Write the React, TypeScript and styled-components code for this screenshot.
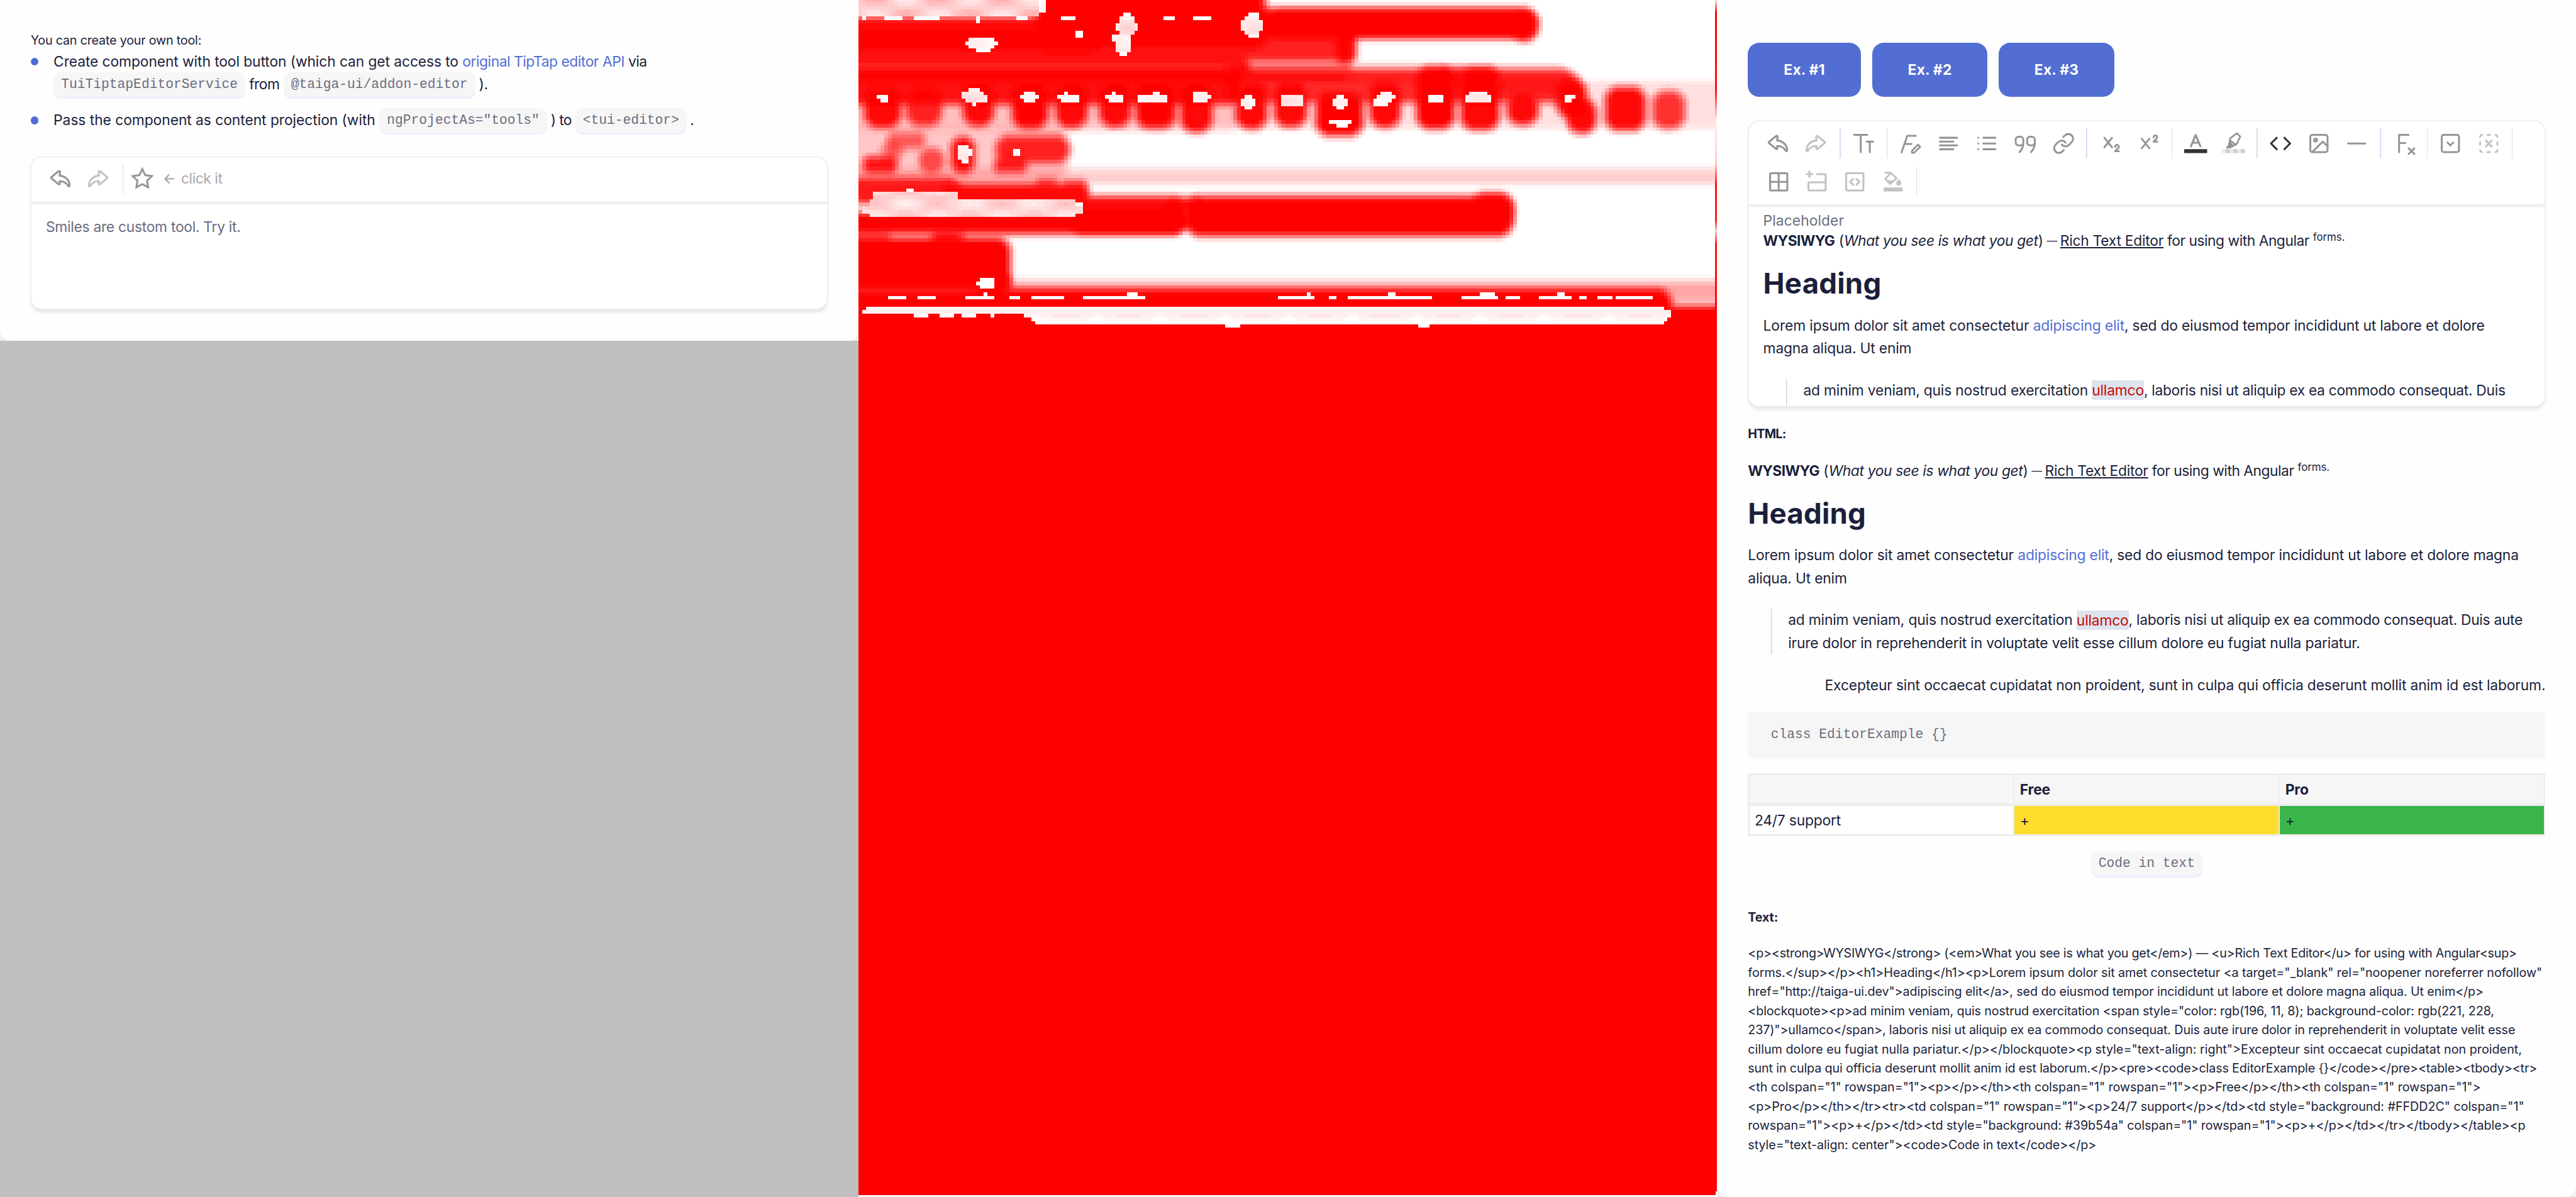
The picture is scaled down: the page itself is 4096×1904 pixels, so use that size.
import React from "react";
import styled, { createGlobalStyle, css } from "styled-components";

/* 1rem is ten layout pixels; the board is 2694 layout pixels wide. */
const GlobalStyle = createGlobalStyle`
  html { font-size: calc(100vw / 269.4); }
  body { margin: 0; background: #fff; overflow: hidden; }
  *, *::before, *::after { box-sizing: border-box; }
`;

const ink = "#1b1f3b";
const muted = "#6b6d80";
const accent = "#526ed3";
const edge = "#ededed";
const sans = `Inter, "Liberation Sans", sans-serif`;
const mono = `"Liberation Mono", "Courier New", monospace`;

const Board = styled.main`
  display: flex;
  width: 269.4rem;
  height: 125.2rem;
  overflow: hidden;
  font-family: ${sans};
  font-size: 1.5rem;
  line-height: 2.4rem;
  color: ${ink};
`;

const Column = styled.section<{ $backdrop: string }>`
  width: 89.8rem;
  height: 100%;
  flex: none;
  background: ${(p) => p.$backdrop};
`;

const SheetFrame = styled.div`
  background: #efefef;
`;

const Sheet = styled.div<{ $height: string }>`
  display: flow-root;
  height: ${(p) => p.$height};
  padding: 0 3.2rem;
  background: #fefefe;
  border-radius: 0 0 1.1rem 1.1rem;
`;

/* ---------- text ---------- */

const Line = styled.div<{ $right?: boolean }>`
  display: flex;
  justify-content: ${(p) => (p.$right ? "flex-end" : "flex-start")};
  white-space: pre;
`;

const Seg = styled.span<{ $ls?: number }>`
  letter-spacing: ${(p) => (p.$ls ?? -8) / 1000}em;
`;
const Strong = styled(Seg)`
  font-weight: 700;
`;
const Em = styled(Seg)`
  font-style: italic;
`;
const Dash = styled(Seg)`
  font-size: 1.1rem;
`;
const Under = styled(Seg)`
  text-decoration: underline;
  text-decoration-thickness: 0.14rem;
  text-underline-offset: 0.14rem;
`;
const Sup = styled(Seg)`
  font-size: 1.12rem;
  transform: translateY(-0.42rem);
`;
const Anchor = styled(Seg)`
  color: ${accent};
`;
const Mark = styled(Seg)`
  height: 2.05rem;
  margin-top: 0.15rem;
  line-height: 2.1rem;
  color: #c40b08;
  background: #dde4ed;
`;

const Small = styled.div<{ $gap?: string; $bold?: boolean }>`
  margin-top: ${(p) => p.$gap ?? 0};
  font-size: 1.3rem;
  line-height: 2rem;
  font-weight: ${(p) => (p.$bold ? 700 : 400)};
  white-space: pre;
`;

const Pill = styled.code`
  display: inline-block;
  height: 2.56rem;
  margin: -0.4rem 0;
  padding: 0.05rem 0.8rem 0;
  border-radius: 0.8rem;
  background: #f6f6f6;
  box-shadow: 0 0.2rem 0 #eceffe;
  color: ${muted};
  font: 1.4rem/2.56rem ${mono};
  vertical-align: 0.13rem;
`;

const Bullets = styled.ul`
  display: flex;
  flex-direction: column;
  gap: 1.35rem;
  margin: 0;
  padding: 0;
  list-style: none;
`;
const Bullet = styled.li`
  display: flex;
  gap: 1.6rem;
  white-space: pre;
  &::before {
    content: "";
    flex: none;
    width: 0.8rem;
    height: 0.8rem;
    margin-top: 0.8rem;
    border-radius: 50%;
    background: ${accent};
  }
`;

/* ---------- editor ---------- */

const EditorCard = styled.div<{ $height: string; $gap: string }>`
  display: flex;
  flex-direction: column;
  height: ${(p) => p.$height};
  margin: ${(p) => p.$gap} 0.1rem 0;
  overflow: hidden;
  border-radius: 1.1rem;
  background: #fff;
  box-shadow: 0 0 0 0.1rem ${edge}, 0 0.3rem 0.35rem 0.05rem rgba(0, 0, 0, 0.09);
`;
const Tools = styled.div`
  display: flex;
  flex-wrap: wrap;
  flex: none;
  padding: 0.3rem 1.1rem 0.4rem;
  box-shadow: 0 0.1rem 0 #e9e9e9, 0 0.2rem 0.3rem rgba(0, 0, 0, 0.1);
`;
const Tool = styled.span<{ $off?: boolean; $on?: boolean; $slim?: boolean }>`
  display: flex;
  align-items: center;
  justify-content: center;
  width: ${(p) => (p.$slim ? 3.2 : 4)}rem;
  height: 4rem;
  color: ${(p) => (p.$on ? "#333" : p.$off ? "#c2c2c2" : "#959595")};
`;
const Divider = styled.span`
  width: 0.1rem;
  height: 3.2rem;
  margin: 0.4rem;
  background: #d7def2;
`;
const Hint = styled.span`
  display: flex;
  align-items: center;
  gap: 0.7rem;
  margin-left: 0.65rem;
  color: #a9a9a9;
`;
const EditorBody = styled.div<{ $top: string }>`
  flex: 1;
  min-height: 0;
  overflow: hidden;
  padding: ${(p) => p.$top} 1.5rem 0;
`;
const Placeholder = styled.div<{ $height?: string }>`
  height: ${(p) => p.$height ?? "auto"};
  color: ${muted};
  white-space: pre;
`;

const Buttons = styled.div`
  display: flex;
  gap: 1.2rem;
  padding-top: 4.5rem;
`;
const Button = styled.button<{ $width: string }>`
  width: ${(p) => p.$width};
  height: 5.6rem;
  padding: 0;
  border: 0;
  border-radius: 1.2rem;
  background: ${accent};
  color: #fff;
  font: 700 1.5rem/2.4rem ${sans};
`;

/* ---------- document ---------- */

const Title = styled.h1`
  display: flex;
  margin: 1.46rem 0 1.39rem;
  font-size: 3rem;
  line-height: 3.6rem;
  font-weight: 700;
`;
const Quote = styled.blockquote<{ $gap: string; $tail?: string }>`
  margin: ${(p) => p.$gap} 0 0 2.4rem;
  padding: 0 0 ${(p) => p.$tail ?? 0} 1.8rem;
  box-shadow: inset 0.1rem 0 0 #d5d5d8;
`;
const Spaced = styled.div<{ $gap: string; $center?: boolean }>`
  margin-top: ${(p) => p.$gap};
  ${(p) =>
    p.$center &&
    css`
      display: flex;
      justify-content: center;
    `}
`;
const CodeBlock = styled.pre`
  height: 4.8rem;
  margin: 1.57rem 0 1.6rem;
  padding: 0 2.4rem;
  border-radius: 0.4rem;
  background: #f6f6f6;
  color: ${muted};
  font: 1.4rem/4.7rem ${mono};
`;
const Table = styled.div`
  display: grid;
  grid-template-columns: repeat(3, 1fr);
  grid-auto-rows: 3rem;
  gap: 0.2rem 0.15rem;
  padding: 0.2rem 0.15rem;
  background: ${edge};
`;
const Cell = styled.div<{ $fill?: string; $head?: boolean }>`
  padding-left: 0.55rem;
  line-height: 3rem;
  background: ${(p) => p.$fill ?? (p.$head ? "#f6f6f6" : "#fff")};
  font-weight: ${(p) => (p.$head ? 700 : 400)};
`;

/* ---------- icons ---------- */

const Glyph = styled.svg<{ $size?: string }>`
  width: ${(p) => p.$size ?? "2.4rem"};
  height: ${(p) => p.$size ?? "2.4rem"};
  flex: none;
  overflow: visible;
  fill: none;
  stroke: currentColor;
  stroke-width: 2;
  stroke-linecap: round;
  stroke-linejoin: round;
`;

const arrowShape =
  "M2 11.7Q1.1 11 2 10.2L9.2 4.3Q10.9 3.4 10.8 5L10.3 8.8C17 9.4 20.8 14 20.8 19Q20.6 20.7 19.4 19.7C17.4 16 14.5 14.5 10.3 14.6L10.7 16.9Q10.6 18.5 9.2 17.7Z";

const icons: Record<string, React.ReactNode> = {
  undo: <path d={arrowShape} />,
  redo: <path d={arrowShape} transform="translate(21.8 0) scale(-1 1)" />,
  star: (
    <path
      d="M12 2l3.09 6.26L22 9.27l-5 4.87 1.18 6.88L12 17.77l-6.18 3.25L7 14.14 2 9.27l6.91-1.01z"
      strokeLinejoin="miter"
    />
  ),
  size: <path d="M2 3h14M9 3v18M15.2 10h6.8M18.5 10v11" />,
  font: (
    <>
      <path d="M18 4H9L3 21.4M6.4 12.5h7" />
      <path d="M20.2 13.2l2.3 2.4-6.4 6.1H14v-2.2z" strokeWidth={1.9} />
    </>
  ),
  align: <path d="M3 6h18M3 10h14M3 14h18M3 18h14" />,
  list: <path d="M3 6h.01M3 12h.01M3 18h.01M8.4 6H21M8.4 12H21M8.4 18H21" />,
  quote: (
    <path d="M10 8a3 3 0 0 0-3-3H5a3 3 0 0 0-3 3v3a3 3 0 0 0 3 3h2a3 3 0 0 0 3-3zv4c0 4-1.6 6.5-4 9M22 8a3 3 0 0 0-3-3h-2a3 3 0 0 0-3 3v3a3 3 0 0 0 3 3h2a3 3 0 0 0 3-3zv4c0 4-1.6 6.5-4 9" />
  ),
  link: (
    <path d="M10 13a5 5 0 0 0 7.54.54l3-3a5 5 0 0 0-7.07-7.07l-1.72 1.71M14 11a5 5 0 0 0-7.54-.54l-3 3a5 5 0 0 0 7.07 7.07l1.71-1.71" />
  ),
  sub: <path d="M6 6l8 10M14 6L6 16M17.3 15.4a1.9 1.8 0 1 1 3.3 1.2L17.3 20h3.9" />,
  sup: <path d="M5 7l8 10M13 7L5 17M17.3 5.4a1.9 1.8 0 1 1 3.3 1.2L17.3 10h3.9" />,
  color: (
    <>
      <path d="M7 15l5-12 5 12M9 11.2h6" />
      <path d="M0 18h24v4H0z" fill="#333" stroke="none" />
    </>
  ),
  marker: (
    <>
      <path d="M15.7 1.3l3.5 3.4-3.5 7.5-3.8 2.2-4-3.7.7-4zM8.4 8.6l6.2 4.8" strokeWidth={1.8} />
      <path d="M7.2 11.4l4.4 3.8-2.9 1.5H4.5l2.4-3.3z" fill="currentColor" strokeWidth={0.8} />
      <path d="M0 18h24v4H0z" fill="#e7e9ec" stroke="none" />
      <path d="M4 18h4v4H4zM12 18h4v4h-4zM20 18h4v4h-4z" fill="#c9cdd3" stroke="none" />
    </>
  ),
  code: <path d="M16 18l6-6-6-6M8 6l-6 6 6 6" />,
  image: (
    <>
      <rect x={3} y={3} width={18} height={18} rx={2} />
      <circle cx={8.5} cy={8.5} r={1.5} />
      <path d="M21 15l-5-5L5 21" />
    </>
  ),
  rule: <path d="M3 12h18" />,
  clear: <path d="M17 3H7v18M7 11.5h6.5M17 17l6 6M23 17l-6 6" />,
  collapse: (
    <>
      <rect x={3} y={3} width={18} height={18} rx={2} />
      <path d="M9 11l3 3 3-3" />
    </>
  ),
  ungroup: (
    <path d="M5 3a2 2 0 0 0-2 2M19 3a2 2 0 0 1 2 2M21 19a2 2 0 0 1-2 2M5 21a2 2 0 0 1-2-2M10.8 3h2.4M10.8 21h2.4M3 10.8v2.4M21 10.8v2.4M9 9l6 6M15 9l-6 6" />
  ),
  table: (
    <>
      <rect x={3} y={3} width={18} height={18} rx={1} />
      <path d="M12 3v18M3 12h18" />
    </>
  ),
  addRow: (
    <path d="M4 1v6M1 4h6M12 4h8a1 1 0 0 1 1 1v15a1 1 0 0 1-1 1H4a1 1 0 0 1-1-1v-6.5a1 1 0 0 1 1-1h17" />
  ),
  merge: (
    <>
      <rect x={3} y={3} width={18} height={18} rx={1} />
      <path d="M10.3 9L7 12l3.3 3M13.7 9l3.3 3-3.3 3" />
    </>
  ),
  fill: (
    <>
      <path d="M4 2.5h5.5l6 5.7-6.7 6-5-5.2 5.7-6" strokeWidth={1.9} />
      <path d="M3.6 10.5h10.8l-5.6 4.3z" fill="currentColor" stroke="none" />
      <path
        d="M17.9 9c1.6 2 2.6 3.2 2.6 4.4a2.6 2.6 0 0 1-5.2 0c0-1.2 1-2.4 2.6-4.4z"
        fill="currentColor"
        stroke="none"
      />
      <rect x={2} y={18} width={20} height={4} rx={0.8} fill="currentColor" stroke="none" />
    </>
  ),
};

const Icon = ({ name }: { name: string }) => <Glyph viewBox="0 0 24 24">{icons[name]}</Glyph>;

type Entry = string | null;
/* null draws a divider, "-" marks a disabled tool and "+" an active one */
const toolbar: Entry[] = [
  "undo", "-redo", null, "size", null, "font", "align", "list", "quote", "link", null,
  "sub", "sup", null, "color", "marker", null, "+code", "image", "rule", null, "clear", null,
  "collapse", "-ungroup", null, "table", "-addRow", "-merge", "-fill", null,
];

const ToolRow = ({ entries }: { entries: Entry[] }) => (
  <>
    {entries.map((e, i) =>
      e === null ? (
        <Divider key={i} />
      ) : (
        <Tool key={i} $off={e[0] === "-"} $on={e[0] === "+"} $slim={e === "star"}>
          <Icon name={e.replace(/^[-+]/, "")} />
        </Tool>
      )
    )}
  </>
);

/* ---------- difference map ---------- */

/* The map is sampled on a coarse grid from soft red bands; islands stay pale. */
type Box = [number, number, number, number, number];
const MAP_W = 3129;
const CELL_W = 13.4;
const CELL_H = 22.49;
const FIRST_ROW = 13;
const ROWS = 91;
const SOLID_FROM = 2037;

const bands: Box[] = [
  [640, -180, 1490, 320, 0.99], [1400, 38, 2480, 250, 0.98], [1500, 60, 2460, 240, 0.9], [2380, 70, 2478, 270, 0.8],
  [-80, 95, 900, 340, 0.97], [-80, 180, 1805, 400, 0.88], [1735, 170, 1820, 412, 0.95],
  [-80, 330, 1430, 520, 0.85], [1330, 385, 1800, 520, 0.45], [1330, 405, 2330, 520, 0.5],
  [-80, 425, 1400, 670, 0.94], [1330, 435, 2635, 655, 0.82], [2100, 410, 2600, 600, 0.5],
  [15, 540, 162, 812, 0.97], [168, 540, 310, 802, 0.82], [374, 500, 500, 802, 0.96], [552, 500, 698, 818, 0.98],
  [712, 500, 840, 812, 0.97], [872, 500, 998, 808, 0.97], [1005, 500, 1162, 818, 0.98], [1168, 500, 1296, 842, 0.97],
  [1368, 510, 1496, 822, 0.97], [1508, 510, 1642, 808, 0.97], [1660, 570, 1846, 864, 1], [1856, 500, 1982, 812, 0.96],
  [2026, 410, 2180, 820, 1], [2188, 420, 2342, 828, 0.98], [2356, 580, 2484, 795, 0.96], [2536, 490, 2660, 750, 0.96],
  [2576, 610, 2696, 850, 0.97], [2714, 535, 2876, 832, 0.96], [2886, 560, 3018, 820, 0.78],
  [-80, 640, 1400, 825, 0.25], [1400, 495, 3300, 820, 0.12],
  [-80, 790, 770, 1140, 0.22], [100, 820, 250, 945, 0.55], [80, 880, 165, 1020, 0.5], [10, 970, 148, 1098, 0.9],
  [215, 920, 318, 1098, 0.65], [332, 850, 430, 1098, 0.95], [495, 840, 776, 1035, 0.84], [490, 980, 618, 1092, 0.85],
  [-180, 1050, 3300, 1165, 0.2],
  [-40, 1105, 375, 1290, 0.9], [300, 1138, 845, 1290, 0.97], [645, 1110, 725, 1200, 0.6], [745, 1120, 835, 1210, 0.5],
  [-80, 1320, 1195, 1482, 0.99], [760, 1220, 1195, 1475, 0.98], [1120, 1228, 1270, 1445, 0.93],
  [1190, 1218, 2390, 1495, 0.99], [2230, 1200, 2392, 1445, 0.9],
  [-80, 1480, 560, 1840, 1], [-80, 1440, 120, 1560, 0.6], [260, 1440, 390, 1580, 0.85], [420, 1700, 560, 1860, 0.95],
  [-180, 1755, 3300, 1905, 0.34], [-180, 1800, 2970, 2400, 1],
  [-180, 1905, 3300, 2400, 1],
];

const islands: Box[] = [
  [0, 0, 655, 100, 0.3], [640, 0, 678, 80, 0.03], [8, 100, 22, 125, 0], [90, 102, 155, 125, 0], [196, 102, 290, 125, 0],
  [424, 95, 436, 148, 0], [572, 102, 612, 125, 0], [735, 102, 786, 125, 0],
  [398, 237, 492, 305, 0.07], [385, 260, 505, 282, 0.07], [425, 300, 478, 327, 0],
  [787, 192, 813, 237, 0], [948, 102, 1002, 215, 0.18], [962, 80, 988, 102, 0], [935, 148, 1013, 192, 0.12],
  [922, 215, 988, 260, 0.1], [935, 250, 988, 327, 0.16], [948, 320, 975, 350, 0],
  [1110, 102, 1150, 125, 0], [1217, 102, 1284, 125, 0], [1405, 102, 1459, 215, 0.13], [1392, 125, 1473, 192, 0.12], [1419, 80, 1459, 237, 0.04],
  [62, 597, 102, 620, 0], [75, 597, 102, 642, 0], [398, 552, 438, 640, 0.15], [371, 575, 452, 620, 0.15], [385, 597, 464, 642, 0.12], [412, 640, 424, 665, 0],
  [600, 575, 640, 642, 0.05], [587, 597, 652, 620, 0.05], [735, 597, 800, 642, 0.06], [720, 597, 740, 620, 0], [747, 575, 760, 597, 0],
  [908, 597, 962, 642, 0.06], [894, 597, 910, 620, 0], [922, 575, 935, 597, 0], [1014, 597, 1122, 642, 0.06], [1069, 575, 1095, 597, 0],
  [1217, 575, 1271, 642, 0.1], [1271, 597, 1284, 620, 0], [1392, 620, 1445, 665, 0.1], [1405, 597, 1432, 687, 0.04], [1540, 597, 1618, 665, 0.12],
  [1727, 620, 1783, 665, 0.08], [1741, 597, 1769, 687, 0], [1903, 575, 1944, 642, 0.1], [1890, 597, 1957, 620, 0.1], [1877, 620, 1930, 665, 0.04],
  [2080, 597, 2134, 642, 0], [2228, 575, 2298, 642, 0.1], [2214, 597, 2310, 642, 0.07], [2568, 597, 2608, 620, 0], [2568, 597, 2594, 642, 0],
  [1713, 756, 1796, 778, 0], [1741, 756, 1783, 801, 0],
  [358, 912, 398, 1002, 0.12], [371, 912, 398, 1025, 0], [398, 935, 412, 980, 0], [558, 935, 586, 980, 0],
  [169, 1182, 196, 1207, 0], [47, 1207, 358, 1260, 0.28], [35, 1252, 786, 1362, 0.24], [9, 1297, 824, 1342, 0.22], [786, 1275, 813, 1340, 0.03],
  [438, 1747, 492, 1812, 0.02], [424, 1768, 440, 1790, 0], [452, 1836, 464, 1857, 0],
  [102, 1857, 169, 1878, 0], [210, 1857, 277, 1878, 0], [384, 1857, 492, 1878, 0], [546, 1857, 586, 1878, 0], [626, 1857, 746, 1878, 0],
  [814, 1857, 1042, 1878, 0], [974, 1836, 1014, 1857, 0], [1525, 1857, 1659, 1878, 0], [1632, 1836, 1647, 1857, 0],
  [1713, 1857, 1741, 1878, 0], [1783, 1857, 2094, 1878, 0], [1931, 1836, 1957, 1857, 0], [2202, 1857, 2338, 1878, 0],
  [2269, 1836, 2323, 1857, 0], [2365, 1857, 2418, 1878, 0], [2473, 1857, 2595, 1878, 0], [2540, 1836, 2567, 1857, 0],
  [2622, 1857, 2648, 1878, 0], [2689, 1857, 2743, 1878, 0], [2758, 1857, 2893, 1878, 0],
  [8, 1945, 640, 1968, 0.08], [22, 1923, 2935, 1945, 0.04], [196, 1968, 250, 1990, 0], [290, 1968, 344, 1990, 0], [370, 1968, 424, 1990, 0],
  [478, 1968, 492, 1990, 0], [600, 1945, 2960, 1990, 0.11], [626, 1990, 2945, 2014, 0.04], [640, 2014, 2935, 2036, 0.01],
];

/* Horizontal and vertical map units differ, so distances are taken in pixels. */
const UX = 1.742;
const UY = 3;
const SOFT = 30;

const coverage = (x: number, y: number, [x0, y0, x1, y1]: Box) => {
  const hw = (x1 - x0) / 2 / UX;
  const hh = (y1 - y0) / 2 / UY;
  const r = Math.min(hw, hh, 34);
  const dx = Math.abs(x / UX - (x0 + x1) / 2 / UX) - hw + r;
  const dy = Math.abs(y / UY - (y0 + y1) / 2 / UY) - hh + r;
  const d = Math.hypot(Math.max(dx, 0), Math.max(dy, 0)) + Math.min(Math.max(dx, dy), 0) - r;
  const t = Math.min(1, Math.max(0, -d / SOFT + 0.38));
  return t * t * (3 - 2 * t);
};

const heat = (x: number, y: number) => {
  for (const [x0, y0, x1, y1, tone] of islands) {
    if (x >= x0 && x < x1 && y >= y0 && y < y1) {
      return tone * (0.65 + 0.35 * Math.sin(x / 37) * Math.cos(y / 29));
    }
  }
  let rest = 1;
  for (const band of bands) rest *= 1 - band[4] * coverage(x, y, band);
  return 1 - rest;
};

type Run = { x: number; y: number; w: number; level: number };
const buildRuns = () => {
  const found: Run[] = [];
  const cols = Math.floor(MAP_W / CELL_W);
  for (let r = 0; r <= ROWS; r++) {
    const y = FIRST_ROW + (r - 1) * CELL_H;
    let run: Run | null = null;
    for (let c = 0; c < cols; c++) {
      const level = Math.round(heat((c + 0.5) * CELL_W, Math.max(2, y + CELL_H / 2)) * 32);
      if (run && run.level === level) run.w += CELL_W;
      else {
        run = { x: c * CELL_W, y, w: CELL_W, level };
        found.push(run);
      }
    }
  }
  return found;
};
const runs = buildRuns();
const tint = (level: number) => {
  const v = Math.round(255 * (1 - level / 32));
  return `rgb(255,${v},${v})`;
};

const MapSvg = styled.svg`
  display: block;
  width: 100%;
  height: 100%;
`;

const DiffMap = () => (
  <MapSvg viewBox="0 0 3129 7512" preserveAspectRatio="none" shapeRendering="crispEdges">
    {runs.map((r, i) => (
      <rect key={i} x={r.x} y={r.y} width={r.w} height={CELL_H + 0.5} fill={tint(r.level)} />
    ))}
    <rect x={0} y={SOLID_FROM} width={3124} height={7503 - SOLID_FROM} fill="#f00" />
    <path d="M1337 2036h54v22h-54zM2039 2036h41v22h-41z" fill="#fff" />
    <defs>
      <linearGradient id="rim" x1="0" y1="0" x2="0" y2="2100" gradientUnits="userSpaceOnUse">
        <stop offset="0" stopColor="#fdd" />
        <stop offset="0.04" stopColor="#f00" />
        <stop offset="0.27" stopColor="#f11" />
        <stop offset="0.36" stopColor="#fee" />
        <stop offset="0.49" stopColor="#fcc" />
        <stop offset="0.55" stopColor="#f11" />
        <stop offset="0.66" stopColor="#f22" />
        <stop offset="0.69" stopColor="#fcc" />
        <stop offset="0.73" stopColor="#f11" />
        <stop offset="1" stopColor="#f00" />
      </linearGradient>
    </defs>
    <rect x={3122} y={0} width={7} height={7480} fill="url(#rim)" />
  </MapSvg>
);

/* ---------- pages ---------- */

const Intro = () => (
  <Line>
    <Strong $ls={-28}>WYSIWYG</Strong>
    <Seg $ls={0}> (</Seg>
    <Em $ls={-16}>What you see is what you get</Em>
    <Seg $ls={-20}>) </Seg>
    <Dash $ls={-20}>—</Dash>
    <Seg $ls={-70}> </Seg>
    <Under $ls={-11}>Rich Text Editor</Under>
    <Seg $ls={-21}> for using with Angular </Seg>
    <Sup>forms.</Sup>
  </Line>
);

const Heading = () => (
  <Title>
    <Seg $ls={4}>Heading</Seg>
  </Title>
);

const Lorem = ({ tail, next }: { tail: string; next: string }) => (
  <>
    <Line>
      <Seg $ls={-5.5}>{"Lorem ipsum dolor sit amet consectetur "}</Seg>
      <Anchor>adipiscing elit</Anchor>
      <Seg>{tail}</Seg>
    </Line>
    <Line>
      <Seg>{next}</Seg>
    </Line>
  </>
);

const Veniam = ({ tail }: { tail: string }) => (
  <Line>
    <Seg>{"ad minim veniam, quis nostrud exercitation "}</Seg>
    <Mark>ullamco</Mark>
    <Seg $ls={-13.5}>{tail}</Seg>
  </Line>
);

const source: [string, number][] = [
  ["<p><strong>WYSIWYG</strong> (<em>What you see is what you get</em>) — <u>Rich Text Editor</u> for using with Angular<sup>", -12],
  ['forms.</sup></p><h1>Heading</h1><p>Lorem ipsum dolor sit amet consectetur <a target="_blank" rel="noopener noreferrer nofollow"', -4],
  ['href="http://taiga-ui.dev">adipiscing elit</a>, sed do eiusmod tempor incididunt ut labore et dolore magna aliqua. Ut enim</p>', -6],
  ['<blockquote><p>ad minim veniam, quis nostrud exercitation <span style="color: rgb(196, 11, 8); background-color: rgb(221, 228,', -7],
  ['237)">ullamco</span>, laboris nisi ut aliquip ex ea commodo consequat. Duis aute irure dolor in reprehenderit in voluptate velit esse', -7],
  ['cillum dolore eu fugiat nulla pariatur.</p></blockquote><p style="text-align: right">Excepteur sint occaecat cupidatat non proident,', 0],
  ["sunt in culpa qui officia deserunt mollit anim id est laborum.</p><pre><code>class EditorExample {}</code></pre><table><tbody><tr>", -8],
  ['<th colspan="1" rowspan="1"><p></p></th><th colspan="1" rowspan="1"><p>Free</p></th><th colspan="1" rowspan="1">', -4.5],
  ['<p>Pro</p></th></tr><tr><td colspan="1" rowspan="1"><p>24/7 support</p></td><td style="background: #FFDD2C" colspan="1"', -3.5],
  ['rowspan="1"><p>+</p></td><td style="background: #39b54a" colspan="1" rowspan="1"><p>+</p></td></tr></tbody></table><p', -4],
  ['style="text-align: center"><code>Code in text</code></p>', -4],
];

const CustomTool = () => (
  <SheetFrame>
    <Sheet $height="35.65rem">
      <Small $gap="3.25rem">
        <Seg $ls={-11}>You can create your own tool:</Seg>
      </Small>
      <Bullets>
        <Bullet>
          <div>
            <Line>
              <Seg $ls={-4}>Create component with tool button (which can get access to </Seg>
              <Anchor $ls={-20}>original TipTap editor API</Anchor>
              <Seg $ls={-20}> via</Seg>
            </Line>
            <div>
              <Pill>TuiTiptapEditorService</Pill>
              <Seg $ls={-20}> from </Seg>
              <Pill>@taiga-ui/addon-editor</Pill>
              <Seg $ls={-20}> ).</Seg>
            </div>
          </div>
        </Bullet>
        <Bullet>
          <div>
            <Seg $ls={-2}>Pass the component as content projection (with </Seg>
            <Pill>ngProjectAs="tools"</Pill>
            <Seg $ls={-28}> ) to </Seg>
            <Pill>{"<tui-editor>"}</Pill>
            <Seg $ls={-50}> .</Seg>
          </div>
        </Bullet>
      </Bullets>
      <EditorCard $height="15.9rem" $gap="2.62rem">
        <Tools>
          <ToolRow entries={["undo", "-redo", null, "star"]} />
          <Hint>
            <Glyph viewBox="0 0 11 11" $size="1.1rem">
              <path d="M10 5.5H1.5M5 1.2L1 5.5l4 4.3" strokeWidth={1.5} />
            </Glyph>
            <Seg $ls={-20}>click it</Seg>
          </Hint>
        </Tools>
        <EditorBody $top="1.47rem">
          <Placeholder>
            <Seg $ls={-12}>Smiles are custom tool. Try it.</Seg>
          </Placeholder>
        </EditorBody>
      </EditorCard>
    </Sheet>
  </SheetFrame>
);

const Wysiwyg = () => (
  <SheetFrame>
    <Sheet $height="125.2rem">
      <Buttons>
        <Button $width="11.8rem">
          <Seg $ls={10}>Ex. #1</Seg>
        </Button>
        <Button $width="12.05rem">
          <Seg $ls={10}>Ex. #2</Seg>
        </Button>
        <Button $width="12.05rem">
          <Seg $ls={10}>Ex. #3</Seg>
        </Button>
      </Buttons>
      <EditorCard $height="29.8rem" $gap="2.6rem">
        <Tools>
          <ToolRow entries={toolbar} />
        </Tools>
        <EditorBody $top="0.5rem">
          <Placeholder $height="2.12rem">
            <Seg $ls={3}>Placeholder</Seg>
          </Placeholder>
          <Intro />
          <Heading />
          <Lorem tail=", sed do eiusmod tempor incididunt ut labore et dolore" next="magna aliqua. Ut enim" />
          <Quote $gap="2rem" $tail="1.5rem">
            <Veniam tail=", laboris nisi ut aliquip ex ea commodo consequat. Duis" />
          </Quote>
        </EditorBody>
      </EditorCard>
      <Small $gap="1.9rem" $bold>
        <Seg $ls={-40}>HTML:</Seg>
      </Small>
      <Spaced $gap="1.68rem">
        <Intro />
        <Heading />
        <Lorem tail=", sed do eiusmod tempor incididunt ut labore et dolore magna" next="aliqua. Ut enim" />
        <Quote $gap="1.97rem">
          <Veniam tail=", laboris nisi ut aliquip ex ea commodo consequat. Duis aute" />
          <Line>
            <Seg>irure dolor in reprehenderit in voluptate velit esse cillum dolore eu fugiat nulla pariatur.</Seg>
          </Line>
        </Quote>
        <Spaced $gap="2.03rem">
          <Line $right>
            <Seg $ls={-6.5}>
              Excepteur sint occaecat cupidatat non proident, sunt in culpa qui officia deserunt mollit anim id est laborum.
            </Seg>
          </Line>
        </Spaced>
        <CodeBlock>{"class EditorExample {}"}</CodeBlock>
        <Table>
          <Cell $head />
          <Cell $head>
            <Seg>Free</Seg>
          </Cell>
          <Cell $head>
            <Seg>Pro</Seg>
          </Cell>
          <Cell>
            <Seg>24/7 support</Seg>
          </Cell>
          <Cell $fill="#ffdd2c">+</Cell>
          <Cell $fill="#39b54a">+</Cell>
        </Table>
        <Spaced $gap="1.95rem" $center>
          <Pill>Code in text</Pill>
        </Spaced>
      </Spaced>
      <Small $gap="3.8rem" $bold>
        <Seg>Text:</Seg>
      </Small>
      <Spaced $gap="1.76rem">
        {source.map(([text, ls]) => (
          <Small key={text}>
            <Seg $ls={ls}>{text}</Seg>
          </Small>
        ))}
      </Spaced>
    </Sheet>
  </SheetFrame>
);

export default function App() {
  return (
    <>
      <GlobalStyle />
      <Board>
        <Column $backdrop="#bfbfbf">
          <CustomTool />
        </Column>
        <Column $backdrop="#fff">
          <DiffMap />
        </Column>
        <Column $backdrop="#fff">
          <Wysiwyg />
        </Column>
      </Board>
    </>
  );
}
